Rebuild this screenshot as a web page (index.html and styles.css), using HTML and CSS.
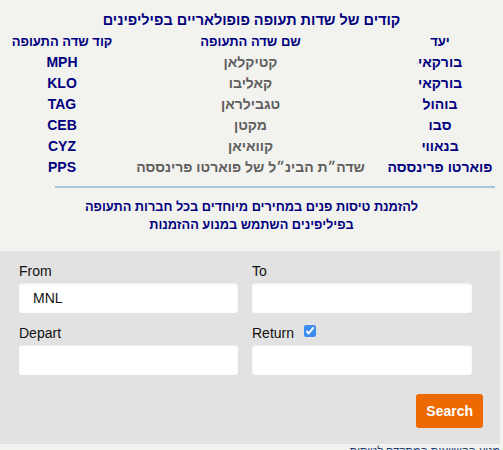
FILE: index.html
```html
<!DOCTYPE html>
<html lang="he">
<head>
    <meta charset="UTF-8">
    <title>קודים של שדות תעופה</title>
    <link rel="stylesheet" href="styles.css">
</head>
<body>
    <div class="codes" dir="rtl">
        <h1>קודים של שדות תעופה פופולאריים בפיליפינים</h1>
        <table class="airports">
            <thead>
                <tr>
                    <th class="col-dest">יעד</th>
                    <th class="col-name">שם שדה התעופה</th>
                    <th class="col-code">קוד שדה התעופה</th>
                </tr>
            </thead>
            <tbody>
                <tr><td class="dest">בורקאי</td><td class="name">קטיקלאן</td><td class="code">MPH</td></tr>
                <tr><td class="dest">בורקאי</td><td class="name">קאליבו</td><td class="code">KLO</td></tr>
                <tr><td class="dest">בוהול</td><td class="name">טגבילראן</td><td class="code">TAG</td></tr>
                <tr><td class="dest">סבו</td><td class="name">מקטן</td><td class="code">CEB</td></tr>
                <tr><td class="dest">בנאווי</td><td class="name">קוואיאן</td><td class="code">CYZ</td></tr>
                <tr><td class="dest">פוארטו פרינססה</td><td class="name">שדה״ת הבינ״ל של פוארטו פרינססה</td><td class="code">PPS</td></tr>
            </tbody>
        </table>
        <div class="divider"></div>
        <p class="note">להזמנת טיסות פנים במחירים מיוחדים בכל חברות התעופה<br>בפיליפינים השתמש במנוע ההזמנות</p>
    </div>

    <form class="search-box">
        <div class="fields">
            <div class="field">
                <label for="from">From</label>
                <input type="text" id="from" value="MNL">
            </div>
            <div class="field">
                <label for="to">To</label>
                <input type="text" id="to">
            </div>
            <div class="field">
                <label for="depart">Depart</label>
                <input type="text" id="depart">
            </div>
            <div class="field">
                <label for="ret">Return <input type="checkbox" class="return-check" checked></label>
                <input type="text" id="ret">
            </div>
        </div>
        <div class="actions">
            <button type="button" class="btn">Search</button>
        </div>
    </form>
    <div class="credit" dir="rtl">מנוע ההשוואות המתקדם לטיסות</div>
</body>
</html>
```

FILE: styles.css
```css
body {
    margin: 0;
    background-color: #f2f2ee;
    font-family: "Liberation Sans", Arial, sans-serif;
}
.codes {
    padding: 0 8px;
}
h1 {
    margin: 0;
    padding: 10px 0 1px;
    font-size: 14.5px;
    line-height: 20px;
    text-align: center;
    color: #000080;
}
.airports {
    width: 100%;
    border-collapse: collapse;
    table-layout: fixed;
}
.airports th,
.airports td {
    padding: 0;
    height: 21px;
    line-height: 21px;
    text-align: center;
    font-size: 14px;
    font-weight: bold;
    white-space: nowrap;
}
.airports th {
    color: #000080;
    font-size: 13px;
}
.col-dest {
    width: 110px;
}
.col-code {
    width: 108px;
}
.dest,
.code {
    color: #000080;
}
.name {
    color: #5e5e5e;
}
.divider {
    height: 2px;
    margin: 8px 0 0 47px;
    background-color: #a8c4e0;
}
.note {
    margin: 10px 0 0;
    font-size: 12.8px;
    line-height: 18px;
    font-weight: bold;
    text-align: center;
    color: #000080;
}
.search-box {
    width: 500px;
    margin-top: 17px;
    padding: 12px 0 16px 19px;
    box-sizing: border-box;
    background-color: #e2e2e2;
}
.fields {
    display: grid;
    grid-template-columns: 219px 220px;
    column-gap: 14px;
    row-gap: 12px;
}
.field label {
    display: flex;
    align-items: center;
    height: 16px;
    margin-bottom: 4px;
    font-size: 14px;
    color: #111;
}
.field input[type="text"] {
    display: block;
    width: 100%;
    height: 30px;
    box-sizing: border-box;
    padding: 0 14px;
    border: none;
    border-radius: 3px;
    background-color: #fff;
    box-shadow: inset 0 1px 2px rgba(0, 0, 0, 0.08);
    font-family: "Liberation Sans", Arial, sans-serif;
    font-size: 14px;
    color: #111;
}
.return-check {
    width: 12px;
    height: 12px;
    margin: 0 0 4px 10px;
    accent-color: #3b8df0;
}
.actions {
    display: flex;
    justify-content: flex-end;
    padding-right: 17px;
    margin-top: 19px;
}
.btn {
    height: 34px;
    padding: 0 10px;
    border: none;
    border-radius: 3px;
    background-color: #ee6a00;
    color: white;
    font-family: "Liberation Sans", Arial, sans-serif;
    font-size: 14px;
    font-weight: bold;
    cursor: pointer;
}
.credit {
    width: 500px;
    font-size: 11px;
    line-height: 14px;
    color: #1c3f74;
}
```
